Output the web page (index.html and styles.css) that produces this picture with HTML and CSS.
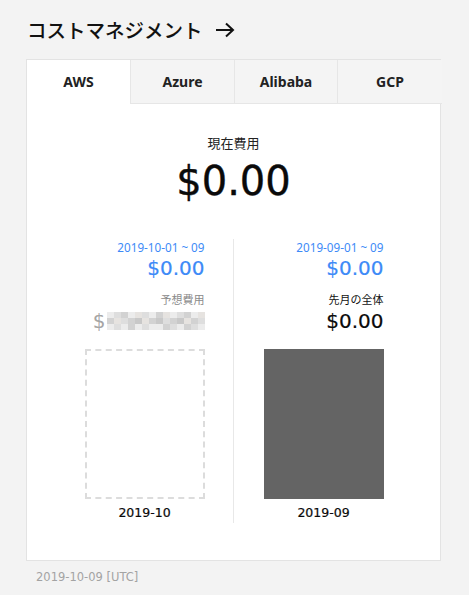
FILE: index.html
```html
<!DOCTYPE html>
<html lang="ja">
<head>
<meta charset="utf-8">
<link rel="stylesheet" href="styles.css">
</head>
<body>
<div class="page">
  <h1 class="title">コストマネジメント
    <svg class="arrow" width="20" height="16" viewBox="0 0 20 16"><path d="M1 8H18M11 1.5L18 8L11 14.5" fill="none" stroke="#111" stroke-width="2"/></svg>
  </h1>
  <div class="card">
    <div class="tabs">
      <div class="tab active">AWS</div>
      <div class="tab">Azure</div>
      <div class="tab">Alibaba</div>
      <div class="tab">GCP</div>
    </div>
    <div class="current">
      <div class="current-label">現在費用</div>
      <div class="current-amount">$0.00</div>
    </div>
    <div class="compare">
      <div class="col col-left">
        <div class="range">2019-10-01 ~ 09</div>
        <div class="amount blue">$0.00</div>
        <div class="sub gray">予想費用</div>
        <div class="blurred"><span class="dollar">$</span>
          <div class="mosaic">
            <i class="a"></i><i class="b"></i><i class="c"></i><i class="a"></i><i class="d"></i><i class="b"></i><i class="a"></i><i class="c"></i><i class="d"></i><i class="a"></i><i class="b"></i><i class="c"></i><i class="a"></i><i class="d"></i>
            <i class="c"></i><i class="d"></i><i class="b"></i><i class="c"></i><i class="e"></i><i class="d"></i><i class="c"></i><i class="e"></i><i class="b"></i><i class="c"></i><i class="e"></i><i class="d"></i><i class="c"></i><i class="b"></i>
            <i class="a"></i><i class="b"></i><i class="a"></i><i class="c"></i><i class="a"></i><i class="b"></i><i class="a"></i><i class="a"></i><i class="c"></i><i class="b"></i><i class="a"></i><i class="c"></i><i class="b"></i><i class="a"></i>
          </div>
        </div>
        <div class="bar bar-empty"></div>
        <div class="month">2019-10</div>
      </div>
      <div class="col col-right">
        <div class="range">2019-09-01 ~ 09</div>
        <div class="amount blue">$0.00</div>
        <div class="sub">先月の全体</div>
        <div class="amount black">$0.00</div>
        <div class="bar bar-full"></div>
        <div class="month">2019-09</div>
      </div>
    </div>
  </div>
  <div class="footer">2019-10-09 [UTC]</div>
</div>
</body>
</html>
```
FILE: styles.css
```css
html, body {
  margin: 0;
  padding: 0;
  background: #f3f3f3;
}
body {
  font-family: "Noto Sans", "Noto Sans CJK JP", sans-serif;
  color: #111;
}
.page {
  padding: 19px 28px 0 26px;
  width: 415px;
}
.title {
  margin: 0 0 18px 1px;
  font-family: "Noto Sans CJK JP", sans-serif;
  font-weight: 500;
  font-size: 19.5px;
  line-height: 22px;
  height: 22px;
  display: flex;
  align-items: center;
}
.arrow {
  margin-left: 12px;
}
.card {
  background: #fff;
  border: 1px solid #e3e3e3;
  height: 500px;
  box-sizing: content-box;
}
.tabs {
  display: grid;
  grid-template-columns: 103px 104px 103px 105px;
  height: 44px;
}
.tab {
  background: #f4f4f4;
  border-left: 1px solid #e6e6e6;
  border-bottom: 1px solid #e6e6e6;
  display: flex;
  align-items: center;
  justify-content: center;
  font-weight: 700;
  font-size: 14px;
  color: #222;
  padding-bottom: 1px;
}
.tab.active {
  background: #fff;
  border-left: none;
  border-bottom: none;
}
.current {
  text-align: center;
  padding-top: 29px;
}
.current-label {
  font-family: "Noto Sans CJK JP", sans-serif;
  font-size: 13px;
  line-height: 20px;
  color: #222;
}
.current-amount {
  font-family: "DejaVu Sans", sans-serif;
  font-size: 40px;
  line-height: 50px;
  margin-top: 3px;
  color: #0a0a0a;
  -webkit-text-stroke: 0.4px #0a0a0a;
}
.compare {
  display: flex;
  justify-content: center;
  margin-top: 33px;
}
.col {
  width: 120px;
  text-align: right;
  display: flex;
  flex-direction: column;
  align-items: stretch;
  padding-bottom: 1px;
}
.col-left {
  padding-right: 28px;
  border-right: 1px solid #e8e8e8;
  margin-left: 1px;
}
.col-right {
  padding-left: 30px;
}
.range {
  font-size: 11.7px;
  line-height: 14px;
  color: #3d8af7;
  margin-top: 1px;
}
.amount {
  font-family: "DejaVu Sans", sans-serif;
  font-size: 20px;
  line-height: 24px;
  margin-top: 2px;
  -webkit-text-stroke: 0.2px currentColor;
}
.blue { color: #3d8af7; }
.black { color: #0a0a0a; }
.sub {
  font-family: "Noto Sans CJK JP", sans-serif;
  font-size: 11px;
  line-height: 16px;
  margin-top: 11px;
  color: #111;
}
.sub.gray { color: #8a8a8a; }
.blurred {
  display: flex;
  justify-content: flex-end;
  align-items: center;
  height: 24px;
  margin-top: 2px;
}
.dollar {
  font-family: "DejaVu Sans", sans-serif;
  font-size: 20px;
  color: #a5a5a5;
  margin-right: 1px;
}
.mosaic {
  display: grid;
  grid-template-columns: repeat(14, 7px);
  grid-template-rows: repeat(3, 6px);
}
.mosaic i { display: block; }
.mosaic .a { background: #ececec; }
.mosaic .b { background: #dedede; }
.mosaic .c { background: #d2d2d2; }
.mosaic .d { background: #e6e3e0; }
.mosaic .e { background: #c8c8c8; }
.bar {
  width: 120px;
  height: 150px;
  box-sizing: border-box;
  margin-top: 16px;
}
.bar-empty {
  border: 2px dashed #dcdcdc;
}
.bar-full {
  background: #646464;
}
.month {
  font-family: "DejaVu Sans", sans-serif;
  font-size: 12.5px;
  line-height: 16px;
  text-align: center;
  margin-top: 6px;
  padding-bottom: 1px;
  color: #0a0a0a;
  -webkit-text-stroke: 0.2px #0a0a0a;
}
.footer {
  font-family: "DejaVu Sans", sans-serif;
  font-size: 11.5px;
  color: #a3a3a3;
  margin: 9px 0 0 10px;
}
```
